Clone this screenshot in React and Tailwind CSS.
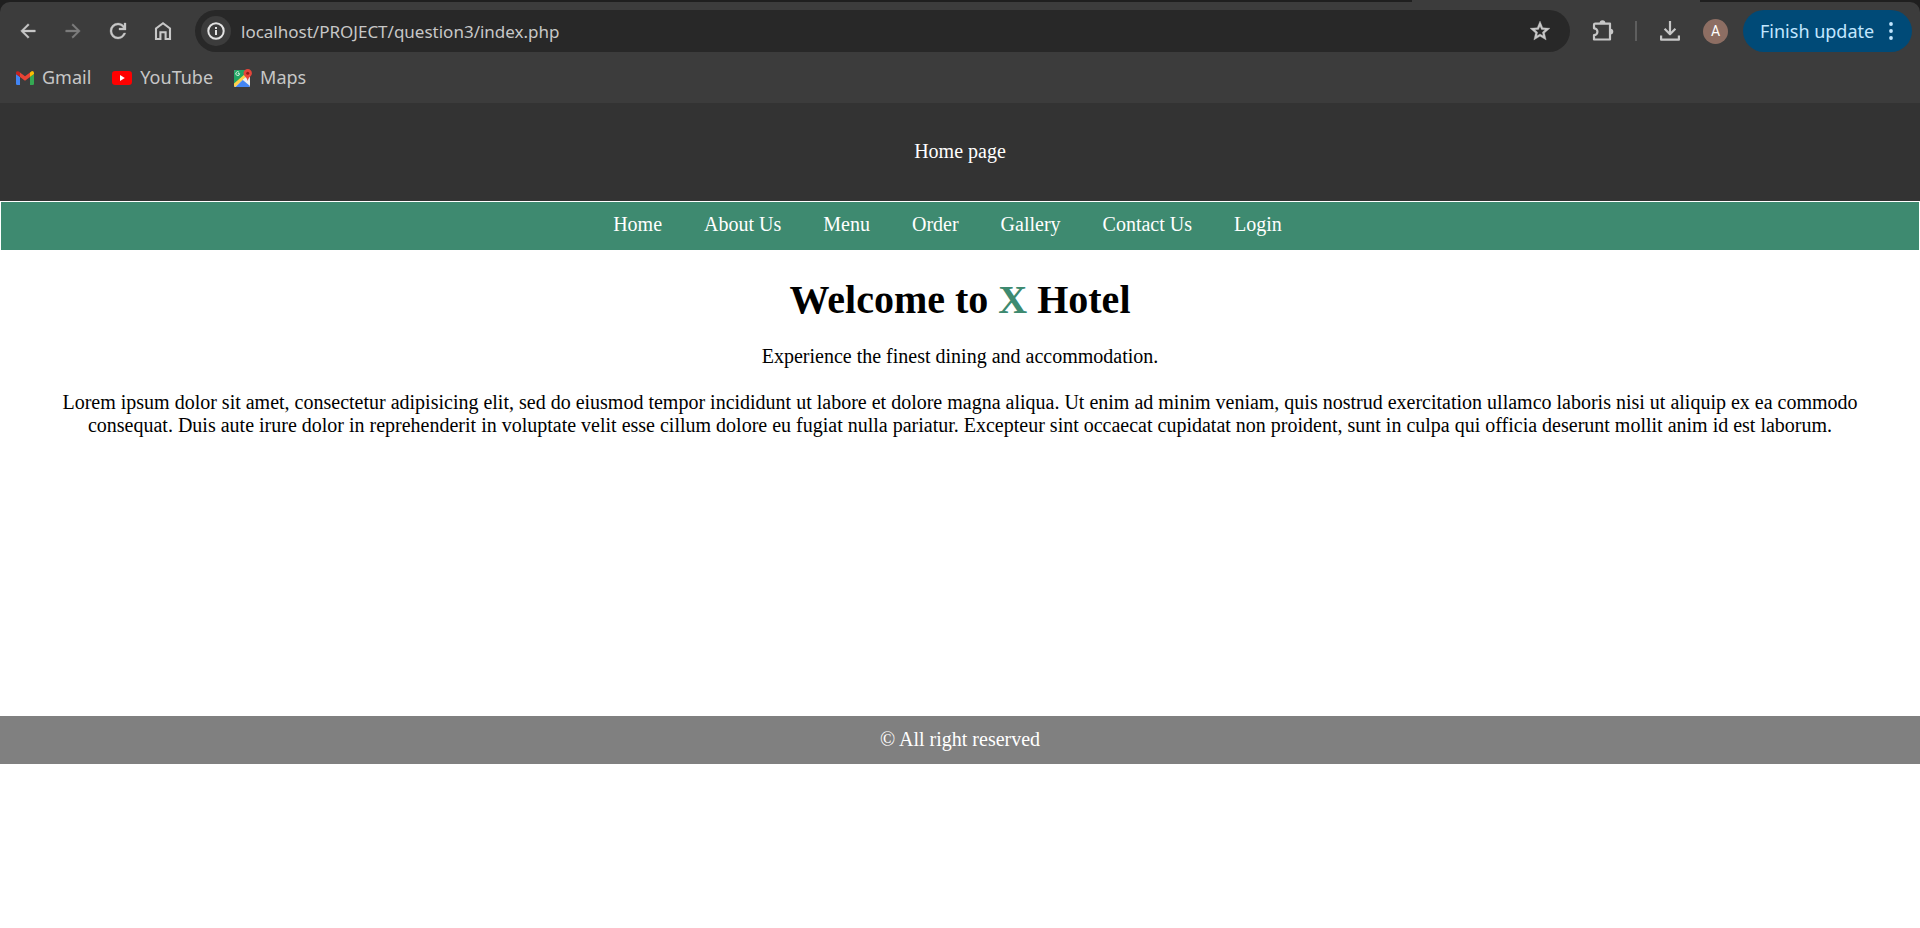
const navLinks = ['Home', 'About Us', 'Menu', 'Order', 'Gallery', 'Contact Us', 'Login'];

function ToolButton({ label, children, className = 'text-[#c7c7c7]' }) {
  return (
    <button type="button" aria-label={label} className={`flex h-10 w-[45px] shrink-0 items-center justify-center ${className}`}>
      {children}
    </button>
  );
}

function ArrowIcon({ className = '' }) {
  return (
    <svg viewBox="0 0 24 24" fill="currentColor" className={`size-[22px] ${className}`}>
      <path d="M7.8 13 13.4 18.6 12 20 4 12 12 4 13.4 5.4 7.8 11H20v2Z" stroke="currentColor" strokeWidth="0.4" />
    </svg>
  );
}

function ReloadIcon() {
  return (
    <svg viewBox="0 0 24 24" fill="currentColor" className="size-6">
      <path d="M12 20q-3.35 0-5.675-2.325T4 12t2.325-5.675T12 4q1.725 0 3.3.7T18 6.75V4h2v7h-7V9h4.2q-.8-1.4-2.187-2.2T12 6Q9.500 6 7.750 7.750T6 12t1.750 4.250T12 18q1.925 0 3.475-1.100T17.650 14h2.100q-.700 2.650-2.850 4.325T12 20Z" stroke="currentColor" strokeWidth="0.3" />
    </svg>
  );
}

function HomeIcon() {
  return (
    <svg viewBox="0 0 24 24" fill="none" stroke="currentColor" strokeWidth="2.1" className="size-6">
      <path d="M5 20V9.500L12 4.200 19 9.500V20H14.600V13.200H9.400V20Z" />
    </svg>
  );
}

function InfoIcon() {
  return (
    <svg viewBox="0 0 18 18" fill="none" stroke="currentColor" strokeWidth="2" className="size-[18px]">
      <circle cx="9" cy="9" r="7.700" />
      <path d="M9 8v5M9 5v2" />
    </svg>
  );
}

function StarIcon() {
  return (
    <svg viewBox="0 0 24 24" fill="currentColor" className="size-6">
      <path d="m8.850 16.825 3.150-1.900 3.150 1.925-.825-3.600 2.775-2.400-3.650-.325-1.450-3.400-1.450 3.375-3.650.325 2.775 2.425ZM5.825 21l1.625-7.025L2 9.250l7.200-.625L12 2l2.800 6.625 7.200.625-5.450 4.725L18.175 21 12 17.275Z" stroke="currentColor" strokeWidth="0.3" />
    </svg>
  );
}

function ExtensionIcon() {
  return (
    <svg viewBox="0 0 24 24" fill="none" className="size-6">
      <path d="M4.200 4.600H19V20.500H3V16.200A3.300 3.300 0 0 0 3 9.300V5.800Q3 4.600 4.200 4.600Z" stroke="currentColor" strokeWidth="2.200" strokeLinejoin="round" />
      <path d="M8.600 4.200a2.900 2.900 0 0 1 5.800 0ZM19.400 9.700a2.900 2.900 0 0 1 0 5.800Z" fill="currentColor" />
    </svg>
  );
}

function DownloadIcon() {
  return (
    <svg viewBox="0 0 24 24" fill="none" stroke="currentColor" strokeWidth="2.200" className="size-6">
      <path d="M12 2v13M6.600 9.800 12 15.200 17.400 9.800M3.100 16.500V20.700H20.900V16.500" strokeLinejoin="round" />
    </svg>
  );
}

function GmailIcon() {
  return (
    <svg viewBox="0 0 18 14" className="h-[14px] w-[18px]">
      <path d="M0 3 4 6v8H1.200Q0 14 0 12.800Z" fill="#4285f4" />
      <path d="M14 6 18 3v9.800Q18 14 16.800 14H14Z" fill="#34a853" />
      <path d="M14 1.500V6l4-3V2Q18 0 16 0Z" fill="#fbbc04" />
      <path d="M4 6V1.500L9 5.200 14 1.500V6L9 9.800Z" fill="#ea4335" />
      <path d="M0 2v1l4 3V1.500L2.800.6Q0-.8 0 2Z" fill="#c5221f" />
    </svg>
  );
}

function YouTubeIcon() {
  return (
    <svg viewBox="0 0 20 14" className="h-[14px] w-5">
      <rect width="20" height="14" rx="3.200" fill="#f00" />
      <path d="M8 4 12.800 7 8 10Z" fill="#fff" />
    </svg>
  );
}

function MapsIcon() {
  return (
    <svg viewBox="0 0 18 18" className="size-[18px]">
      <rect y="1" width="16" height="17" rx="1.500" fill="#dfe3e6" />
      <path d="M1.500 1H12L15 6 0 17.500V2.500Q0 1 1.500 1Z" fill="#1fa463" />
      <path d="M0 14.500 11 5 13 7 1 18 0 17Z" fill="#ffd04b" />
      <path d="M1.500 18 8.800 11 16 17 15 18Z" fill="#4285f4" />
      <path d="M8.800 10.500 12 8 16 12V16.500Z" fill="#eceff1" />
      <path d="M5.600 4.600H3.800M5.100 3.300A1.900 1.900 0 1 0 5.600 4.800" fill="none" stroke="#e8f5e9" strokeWidth="0.900" />
      <path d="M13.700 0a4.200 4.200 0 0 1 4.200 4.200C17.900 7.200 14.300 8 13.700 12 13.100 8 9.500 7.200 9.500 4.200A4.200 4.200 0 0 1 13.700 0Z" fill="#e5453a" />
      <circle cx="13.700" cy="4.200" r="1.500" fill="#8c1d18" />
    </svg>
  );
}

function BrowserChrome() {
  return (
    <div className="bg-[#1f1f1f] font-['Noto_Sans',sans-serif]">
      <div className="flex h-[2px] justify-end">
        <div className="mr-[220px] w-[288px] bg-[#3c3c3c]" />
      </div>
      <div className="h-[101px] rounded-t-[10px] bg-[#3c3c3c] pt-2">
        <div className="flex h-[42px] items-center pr-2 pl-[5px]">
          <ToolButton label="Back"><ArrowIcon /></ToolButton>
          <ToolButton label="Forward" className="text-[#7c7c7c]"><ArrowIcon className="rotate-180" /></ToolButton>
          <ToolButton label="Reload"><ReloadIcon /></ToolButton>
          <ToolButton label="Home"><HomeIcon /></ToolButton>
          <div className="ml-[10px] flex h-full min-w-0 flex-1 items-center rounded-full bg-[#282828] pr-[18px] pl-[6px]">
            <button type="button" aria-label="Site information" className="flex size-[30px] shrink-0 items-center justify-center rounded-full bg-[#3c3c3c] text-[#e3e3e3]">
              <InfoIcon />
            </button>
            <input
              aria-label="Address"
              defaultValue="localhost/PROJECT/question3/index.php"
              className="ml-[10px] h-full min-w-0 flex-1 bg-transparent text-[17px] text-[#c7c7c7] outline-none"
            />
            <button type="button" aria-label="Bookmark this page" className="text-[#c7c7c7]"><StarIcon /></button>
          </div>
          <div className="ml-[10px] flex items-center">
            <ToolButton label="Extensions"><ExtensionIcon /></ToolButton>
            <div className="mx-[10px] h-5 w-[2px] bg-[#5e5e5e]" />
            <ToolButton label="Downloads"><DownloadIcon /></ToolButton>
            <button type="button" aria-label="Profile" className="ml-[11px] flex size-[25px] items-center justify-center rounded-full bg-[#8d6e63] font-[Roboto,sans-serif] text-[14px] text-white">
              A
            </button>
            <button type="button" className="ml-[15px] flex h-[42px] w-[169px] items-center justify-between rounded-full bg-[#004a77] pr-[19px] pl-[17px] text-[18px] whitespace-nowrap text-[#c2e7ff]">
              Finish update
              <svg viewBox="0 0 4 18" fill="currentColor" className="h-[18px] w-1">
                <circle cx="2" cy="2" r="1.900" />
                <circle cx="2" cy="9" r="1.900" />
                <circle cx="2" cy="16" r="1.900" />
              </svg>
            </button>
          </div>
        </div>
        <nav aria-label="Bookmarks" className="flex h-[51px] items-center gap-[21px] pl-4 text-[18px] text-[#c7c7c7]">
          <a href="#gmail" className="flex items-center gap-2"><GmailIcon />Gmail</a>
          <a href="#youtube" className="flex items-center gap-2"><YouTubeIcon />YouTube</a>
          <a href="#maps" className="flex items-center gap-2"><MapsIcon />Maps</a>
        </nav>
      </div>
    </div>
  );
}

export default function App() {
  return (
    <div className="min-h-screen bg-white">
      <BrowserChrome />
      <div className="text-center font-['Liberation_Serif',serif] text-[20px] leading-[23px] text-black">
        <header className="bg-[#333] pt-[37px] pb-[38px] text-white">Home page</header>
        <nav aria-label="Main" className="flex h-[50px] justify-center gap-[42px] border border-white bg-[#3e8a70] pt-[11px] pr-[25px] text-white">
          {navLinks.map((name) => (
            <a key={name} href="#">{name}</a>
          ))}
        </nav>
        <main className="min-h-[465px] px-[50px] pt-[26px]">
          <h1 className="text-[40px] leading-[46px] font-bold">
            Welcome to <span className="text-[#3e8a70]">X</span> Hotel
          </h1>
          <p className="mt-[22px]">Experience the finest dining and accommodation.</p>
          <p className="mt-[23px]">
            Lorem ipsum dolor sit amet, consectetur adipisicing elit, sed do eiusmod tempor incididunt ut labore et dolore magna aliqua. Ut enim ad minim veniam, quis nostrud exercitation ullamco laboris nisi ut aliquip ex ea commodo consequat. Duis aute irure dolor in reprehenderit in voluptate velit esse cillum dolore eu fugiat nulla pariatur. Excepteur sint occaecat cupidatat non proident, sunt in culpa qui officia deserunt mollit anim id est laborum.
          </p>
        </main>
        <footer className="bg-[#808080] pt-[12px] pb-[13px] text-white">© All right reserved</footer>
      </div>
    </div>
  );
}
